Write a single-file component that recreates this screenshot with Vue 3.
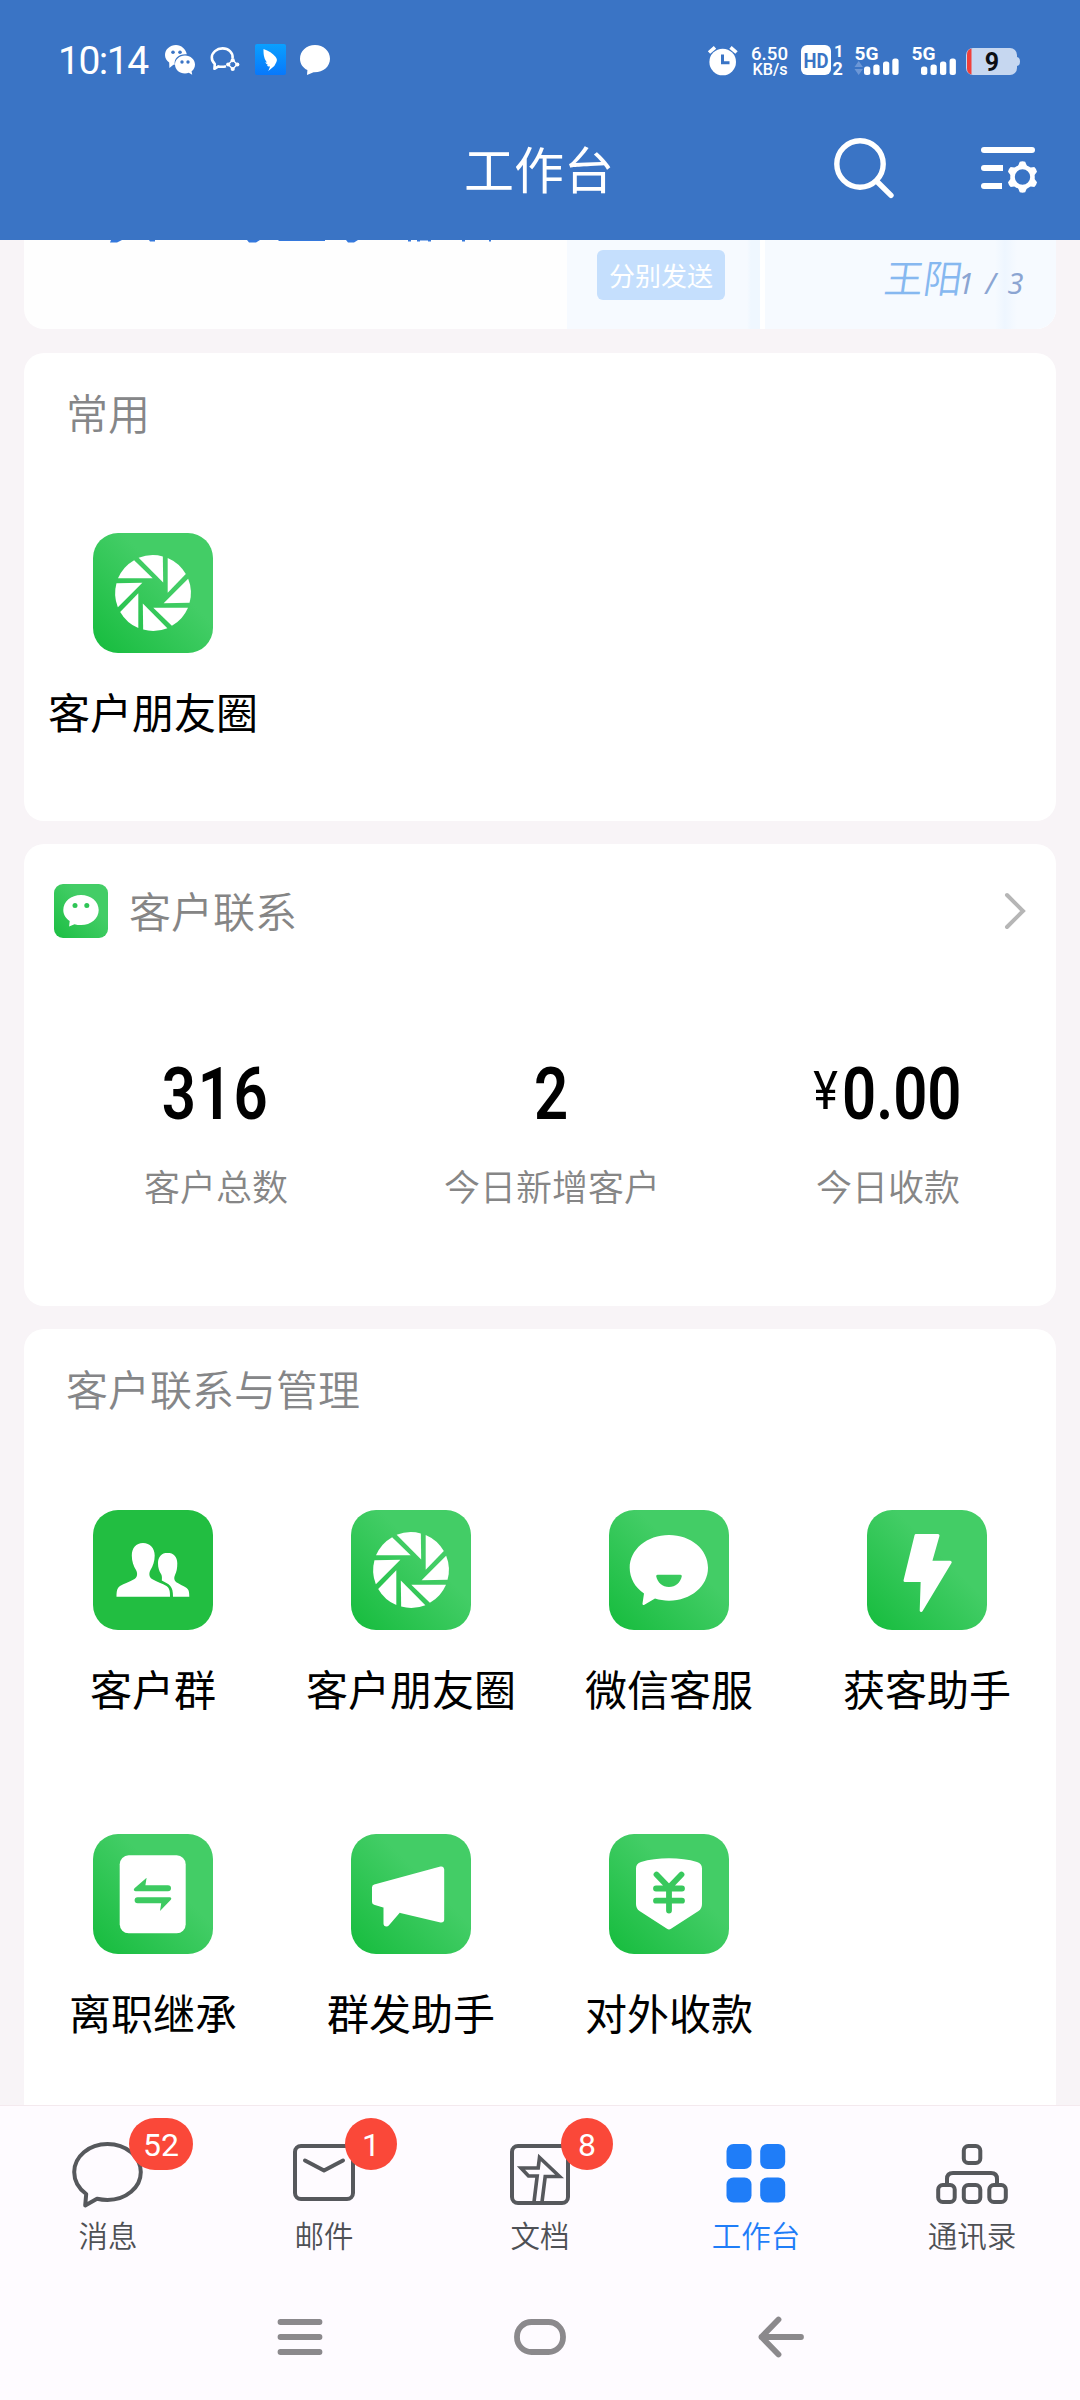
<script setup>
const apps = [
  { name: '客户群', icon: 'group', flat: true },
  { name: '客户朋友圈', icon: 'aperture' },
  { name: '微信客服', icon: 'service' },
  { name: '获客助手', icon: 'bolt' },
  { name: '离职继承', icon: 'transfer' },
  { name: '群发助手', icon: 'horn' },
  { name: '对外收款', icon: 'pay' },
]
const sections = {
  common: [{ name: '客户朋友圈', icon: 'aperture' }],
  manage: apps,
}
const stats = [
  { value: '316', label: '客户总数' },
  { value: '2', label: '今日新增客户' },
  { value: '0.00', unit: '¥', label: '今日收款' },
]
const tabs = [
  { name: '消息', icon: 'chat', badge: '52' },
  { name: '邮件', icon: 'mail', badge: '1' },
  { name: '文档', icon: 'doc', badge: '8' },
  { name: '工作台', icon: 'grid', active: true },
  { name: '通讯录', icon: 'org' },
]
const blades = [0, 45, 90, 135, 180, 225, 270, 315]
const teeth = [0, 60, 120, 180, 240, 300]
</script>

<template>
  <div class="phone">
    <header class="top">
      <div class="status">
        <span class="time">10:14</span>
        <svg class="s-wechat" width="30" height="30" viewBox="0 0 30 30">
          <path fill="#fff" d="M11 0C5 0 0 4.400 0 10c0 3.200 1.600 5.800 4.200 7.600L4.400 23l4-3.200h1.400C8.600 13 14 8.600 21.800 9.200 20.600 4 16.400 0 11 0z" />
          <path fill="#fff" d="M20 10.400c-5.600 0-10 4-10 9s4.400 9 10 9c1.400 0 2.600-.2 3.800-.6l3.400 2-.6-3.600c2.200-1.600 3.400-4 3.400-6.800 0-5-4.400-9-10-9z" />
          <g fill="#3a74c5"><circle cx="8" cy="7.200" r="1.800" /><circle cx="15" cy="7.200" r="1.800" /><circle cx="17" cy="17" r="1.700" /><circle cx="23" cy="17" r="1.700" /></g>
        </svg>
        <svg class="s-work" width="30" height="30" viewBox="0 0 30 30">
          <path fill="none" stroke="#fff" stroke-width="2.600" stroke-linejoin="round" d="M22.600 14C23 8.500 18.500 4.400 12.600 4.400S1.800 8.600 1.800 13.600c0 3 1.400 5 3 6.400l-.4 4.800 4-2.400c2.400.6 4.800.6 7.600-.2" />
          <path fill="none" stroke="#fff" stroke-width="1.400" d="M22.700 16l4.500 4.500-4.500 4.500-4.500-4.500z" />
          <g fill="#fff"><circle cx="22.700" cy="16.200" r="2.100" /><circle cx="27.300" cy="20.500" r="2.100" /><circle cx="22.700" cy="25" r="2.100" /><circle cx="18.200" cy="20.500" r="2.100" /></g>
        </svg>
        <svg class="s-ding" width="31" height="31" viewBox="0 0 31 31">
          <defs><linearGradient id="ding" x1="0" y1="0" x2="0" y2="1"><stop offset="0" stop-color="#0aa0ff" /><stop offset="1" stop-color="#0878fb" /></linearGradient></defs>
          <rect width="31" height="31" rx="2" fill="url(#ding)" />
          <path fill="#fff" d="M8.500 5c5 1.800 9.500 4.400 12 7.800 1.600 2.200 1.800 3.400.8 5.400l-2 3.800-6 5 1.800-4.600c-1.600.2-2.600-.2-3.200-1.200l1.400-.2c-1.600-.8-2.600-1.800-3-2.800l1.700.2C9.600 15.600 8.300 11.600 8.500 5z" />
        </svg>
        <svg class="s-bubble" width="30" height="30" viewBox="0 0 30 30">
          <path fill="#fff" d="M15 0C6.600 0 0 6 0 13.700c0 5 2.800 9 7.400 11.400L7 30l6.600-2.800C23 27.600 30 21.600 30 13.700 30 6 23.400 0 15 0z" />
        </svg>
        <svg class="s-right" width="314" height="54" viewBox="706 34 314 54">
          <g fill="#fff">
            <circle cx="722.700" cy="62" r="13.300" />
            <path stroke="#fff" stroke-width="3.600" d="M709 52.500l6-5.200M736.500 52.500l-6-5.200" />
            <path fill="none" stroke="#3a74c5" stroke-width="3" d="M722.500 54.500v8.300h7" />
            <text class="rb" x="751" y="59.800" font-size="18.500" textLength="37" lengthAdjust="spacingAndGlyphs">6.50</text>
            <text class="rb" x="752.500" y="75" font-size="16.500" textLength="35" lengthAdjust="spacingAndGlyphs">KB/s</text>
            <rect x="801" y="45" width="30" height="30" rx="6" />
            <text class="hv" x="803.500" y="67.500" font-size="19.500" textLength="25" lengthAdjust="spacingAndGlyphs" style="fill:#3a74c5">HD</text>
            <text class="hv" x="834" y="57.300" font-size="16.500">1</text>
            <text class="hv" x="832.500" y="75" font-size="18">2</text>
            <text class="hv" x="854.500" y="60" font-size="19" textLength="24" lengthAdjust="spacingAndGlyphs">5G</text>
            <text class="hv" x="911.500" y="60" font-size="19" textLength="24" lengthAdjust="spacingAndGlyphs">5G</text>
            <path fill="#6c97d6" d="M854.500 67l4.200-6 4.200 6zM854.500 69l4.200 6 4.200-6z" />
            <rect x="864" y="66.500" width="6.300" height="8.500" rx="2.500" /><rect x="873.300" y="64.500" width="6.300" height="10.500" rx="2.500" /><rect x="883" y="61.500" width="6.300" height="13.500" rx="2.500" /><rect x="892.300" y="58.500" width="6.300" height="16.500" rx="2.500" />
            <rect x="921" y="66.500" width="6.300" height="8.500" rx="2.500" /><rect x="930.500" y="64.500" width="6.300" height="10.500" rx="2.500" /><rect x="940" y="61.500" width="6.300" height="13.500" rx="2.500" /><rect x="949.600" y="58.500" width="6.300" height="16.500" rx="2.500" />
          </g>
          <rect x="966" y="48" width="51" height="27" rx="7" fill="#c6d7f0" />
          <path fill="#c6d7f0" d="M1017 57q3 .5 3 4.500t-3 4.500z" />
          <path fill="#f0403b" d="M971.500 48.600v25.800q-4.500-1-4.500-6V54.600q0-5 4.500-6z" />
          <text class="hv" x="992" y="70.500" font-size="25" text-anchor="middle" fill="#0c0f14">9</text>
        </svg>
      </div>
      <div class="bar">
        <h1>工作台</h1>
        <svg class="search" width="64" height="64" viewBox="0 0 64 64" fill="none" stroke="#fff" stroke-width="5.400" stroke-linecap="round">
          <ellipse cx="27" cy="27" rx="23.200" ry="23.200" /><path d="M44.500 45L58 58.300" />
        </svg>
        <svg class="menu" width="60" height="50" viewBox="0 0 60 50">
          <g stroke="#fff" stroke-width="6" fill="none"><path stroke-linecap="round" d="M4 5h48" /><path d="M4 23h19M4 41h18" /></g>
          <g fill="#fff"><circle cx="4" cy="23" r="3" /><circle cx="4" cy="41" r="3" /></g>
          <circle cx="42.500" cy="32" r="17.500" fill="#3a74c5" />
          <circle cx="42.500" cy="32" r="10" fill="none" stroke="#fff" stroke-width="4.600" />
          <path v-for="t in teeth" :key="t" :transform="`rotate(${t} 42.500 32)`" fill="#fff" d="M37 23.500l2.800-6.700q2.700-.9 5.400 0l2.800 6.700z" />
        </svg>
      </div>
    </header>

    <main>
      <section class="banner">
        <svg class="cut" width="543" height="4" viewBox="24 0 543 4" fill="#3478dc"><path d="M111 0h11l-5 2.500h-7zM149 0h6v1.500h-5zM247 0h13l-4 2.500h-7zM278 0h47v1h-46zM346 0h12l-4 2.500h-6zM408 0h3v1.500h-3zM417 0h14v1.500h-3v-1h-8v1h-3zM462 0h3v1.500h-3zM489 0h2v1.500h-2z" /></svg>
        <div class="shade">
          <div class="pane left"><span class="send">分别发送</span></div>
          <div class="pane right"><span class="sign">王阳</span><span class="page">1 / 3</span></div>
        </div>
      </section>

      <template v-for="(list, key) in sections" :key="key">
        <section v-if="key === 'manage'" class="card contact">
          <div class="head">
            <svg width="54" height="54" viewBox="0 0 54 54">
              <defs><linearGradient id="gs" x1="0" y1="1" x2="1" y2="0"><stop offset="0" stop-color="#1bbe42" /><stop offset=".65" stop-color="#43cd66" /></linearGradient></defs>
              <rect width="54" height="54" rx="9" fill="url(#gs)" />
              <path fill="#fff" d="M27 11C17 11 9.300 17.600 9.300 26c0 4.600 2.400 8.400 6.400 11l-.6 5.600 5.400-2.400c2 .6 4.200.9 6.500.9 10 0 17.700-6.600 17.700-15.100S37 11 27 11z" />
              <g fill="#2fc556"><circle cx="21" cy="21.500" r="2.500" /><circle cx="32.800" cy="21.500" r="2.500" /></g>
            </svg>
            <span class="h-title">客户联系</span>
            <svg class="chev" width="24" height="40" viewBox="0 0 24 40" fill="none" stroke="#b6b6b6" stroke-width="4"><path stroke-linecap="round" d="M3 4l16 16L3 36" /></svg>
          </div>
          <div class="stats">
            <div v-for="s in stats" :key="s.label" class="stat">
              <div class="num" :class="{ money: s.unit }"><span v-if="s.unit" class="unit">{{ s.unit }}</span><span>{{ s.value }}</span></div>
              <div class="lab">{{ s.label }}</div>
            </div>
          </div>
        </section>

        <section class="card" :class="key">
          <h2>{{ key === 'common' ? '常用' : '客户联系与管理' }}</h2>
          <div class="apps">
            <div v-for="a in list" :key="a.name" class="app">
              <div class="tile" :class="{ flat: a.flat }">
                <svg width="120" height="120" viewBox="0 0 120 120" fill="#fff">
                  <g v-if="a.icon === 'aperture'" transform="translate(60 60)">
                    <path v-for="b in blades" :key="b" :transform="`rotate(${b})`" d="M14.700-.3V-35A38 38 0 0 1 32.800-18.900z" />
                  </g>
                  <template v-else-if="a.icon === 'group'">
                    <path d="M50 33c-7 0-11.200 5-11.200 12.500 0 6 1.800 10.500 4.200 14.500 1.800 3.500 1.500 7-1.500 9-5 3.200-10.500 4.200-14.500 7-2.500 1.800-3.500 4-3.500 10.700H77c.2-6.200-1-9-3.500-10.700-4-2.800-9.500-3.800-14.500-7-3-2-3.300-5.500-1.500-9 2.400-4 4.200-8.500 4.200-14.500C61.700 38 57 33 50 33z" />
                    <path d="M74.500 42.700c-6 0-9.500 4.300-9.500 10.300 0 5 1.200 8.200 3.200 11.300 1 2 .8 4.400.6 6.200 3 1.800 6.500 3 8.500 5.500 2 2.400 2.700 5.500 2.700 10.700h16.300c0-4.700-.5-7.300-3-8.900-3.300-2.200-7-3.600-10-5.500-2.200-1.500-2.700-4.500-1.200-7.500 1.400-3 2.200-6 2.200-11.500 0-6.200-3.600-10.600-9.800-10.600z" />
                  </template>
                  <path v-else-if="a.icon === 'service'" fill-rule="evenodd" d="M60 25C38 25 20.700 39.500 20.700 57.800c0 10.400 5.300 19.700 14.300 25.700L33.500 93.500c-.2 1.300.8 1.900 1.900 1.200L46 88.600c4.500 1.400 9 2.100 14 2.100 22 0 39-14.500 39-32.900S82 25 60 25zM48.500 64.700h23q1.500 0 1.300 1.500C71.500 72.500 66.500 77 60 77s-11.500-4.500-12.800-10.800q-.2-1.500 1.300-1.500z" />
                  <path v-else-if="a.icon === 'bolt'" stroke="#fff" stroke-width="3" stroke-linejoin="round" d="M49 25.500h22l-7.500 26.700h19.700L54.200 100.500l1-30H38z" />
                  <template v-else-if="a.icon === 'transfer'">
                    <rect x="26.700" y="21.300" width="66" height="78" rx="9" />
                    <path fill="#3dca61" d="M42.500 57.200q-2.800-.4-1-2.900L53.600 43.700l-1.200 7.500H75q3 0 3 3t-3 3zM44.600 63.200h32q2.800.4 1 2.900L67 77l1.200-7.800H44.600q-3 0-3-3t3-3z" />
                  </template>
                  <path v-else-if="a.icon === 'horn'" stroke="#fff" stroke-width="6" stroke-linejoin="round" d="M24 53.500L90.200 35.500v50L50 76l-14.500-4.500L24 68zM35.500 72v17.500L48 75z" />
                  <template v-else>
                    <path d="M60 24.300c10 0 20 1.200 28 3.700 3.500 1.200 5 3 5 6.500V70q0 4.500-3.500 7L62 94.800q-2 1.300-4 0L30.500 77Q27 74.500 27 70V34.500c0-3.500 1.500-5.300 5-6.500 8-2.500 18-3.700 28-3.700z" />
                    <path fill="none" stroke="#38c85d" stroke-width="5.800" stroke-linecap="round" d="M47.500 40.500L60 53.500l12.500-13M47 54.500h26M47 66.700h26M60 54v22.500" />
                  </template>
                </svg>
              </div>
              <div class="name">{{ a.name }}</div>
            </div>
          </div>
        </section>
      </template>
    </main>

    <footer>
      <nav class="tabs">
        <div v-for="t in tabs" :key="t.name" class="tab" :class="{ on: t.active }">
          <div class="ico">
            <svg width="72" height="66" viewBox="0 0 72 66" fill="none" stroke="#56585c" stroke-width="4">
              <path v-if="t.icon === 'chat'" stroke-linejoin="round" d="M35.500 2C17 2 2.200 14.500 2.200 30c0 9 4.500 16.500 12 22l-1 11.500L25 56.800c3.400.8 6.800 1.200 10.500 1.200 18.500 0 33.300-12.500 33.300-28S54 2 35.500 2z" />
              <template v-else-if="t.icon === 'mail'"><rect x="7" y="4" width="58" height="53" rx="6" /><path stroke-linecap="round" stroke-linejoin="round" d="M17 18.500l19 10 19-10" /></template>
              <template v-else-if="t.icon === 'doc'"><rect x="8" y="4" width="56" height="57" rx="6" /><path stroke-width="3.600" d="M30 60l3.200-26h-8.700l-7.500-8h17.200l1.300-10.500L55.500 34.500H41.200L38 60" /></template>
              <g v-else-if="t.icon === 'grid'" fill="#1f7df8" stroke="none"><rect x="6.500" y="2" width="25" height="25" rx="7" /><rect x="40.200" y="2" width="25" height="25" rx="7" /><rect x="6.500" y="35.500" width="25" height="25" rx="7" /><rect x="40.200" y="35.500" width="25" height="25" rx="7" /></g>
              <template v-else><rect x="27.800" y="4" width="16.500" height="17" rx="4.500" /><rect x="2.200" y="43" width="16.500" height="17" rx="4.500" /><rect x="27.800" y="43" width="16.500" height="17" rx="4.500" /><rect x="53.300" y="43" width="16.500" height="17" rx="4.500" /><path d="M11 43v-6q0-6 6-6h38q6 0 6 6v6" /></template>
            </svg>
            <span v-if="t.badge" class="badge">{{ t.badge }}</span>
          </div>
          <span class="t-name">{{ t.name }}</span>
        </div>
      </nav>
      <div class="keys">
        <svg width="52" height="44" viewBox="0 0 52 44"><path d="M7.500 7h39M7.500 22h39M7.500 37h39" /></svg>
        <svg width="54" height="44" viewBox="0 0 54 44"><rect x="4" y="7" width="46" height="30" rx="14.500" /></svg>
        <svg width="52" height="44" viewBox="0 0 52 44"><path d="M6.500 22H46M23.500 4.500L6.500 22l17 17.500" /></svg>
      </div>
    </footer>
  </div>
</template>

<style>
body { margin: 0; background: #f8f4f7; }
</style>

<style scoped>
.phone { width: 1080px; height: 2400px; overflow: hidden; display: flex; flex-direction: column; background: #f8f4f7; font-family: "Noto Sans CJK SC", sans-serif; font-weight: 350; }
svg { display: block; flex: none; }
.top { height: 240px; flex: none; background: #3a74c5; color: #fff; }
.status { height: 100px; display: flex; align-items: flex-start; box-sizing: border-box; padding-top: 44px; }
.time { font: 400 39px/34px Roboto, sans-serif; margin-left: 58px; width: 106px; letter-spacing: -1.500px; }
.s-wechat { margin: 1px 15px 0 1px; }
.s-work { margin-right: 15px; }
.s-ding { margin: 0 14px 0 0; }
.s-bubble { margin-top: 1px; }
.s-right { margin: -10px 60px 0 auto; }
.rb { font-family: Roboto, sans-serif; font-weight: 500; }
.hv { font-family: Roboto, sans-serif; font-weight: 700; }
.bar { height: 140px; display: flex; align-items: flex-start; }
h1 { margin: 42px 0 0 464px; width: 369px; font-size: 50px; line-height: 50px; font-weight: 400; }
.search { margin-top: 37px; }
.menu { margin: 45px 0 0 83px; }
main { flex: 1; min-height: 0; display: flex; flex-direction: column; padding: 0 24px; overflow: hidden; }
.banner { height: 89px; flex: none; display: flex; background: #fefefe; border-radius: 0 0 20px 20px; overflow: hidden; margin-bottom: 24px; }
.shade { flex: 1; display: flex; gap: 5px; background: #fff; }
.left { width: 193px; background: linear-gradient(90deg, #f6faff 180px, #eff7ff 184px); }
.right { flex: 1; display: flex; background: linear-gradient(90deg, #f6faff 230px, #eef6ff 240px, #f6faff 252px); }
.send { display: block; margin: 10px 0 0 30px; width: 128px; height: 50px; border-radius: 6px; background: #c5dffd; color: #fff; font-size: 26px; line-height: 50px; text-align: center; font-weight: 400; }
.sign { margin: 15px 0 0 118px; width: 75px; font-size: 39px; line-height: 42px; color: #86b8f0; transform: skewX(-8deg); white-space: nowrap; }
.page { margin-top: 26px; font: italic 400 29px/34px "Noto Sans", sans-serif; color: #8ba5d2; white-space: nowrap; letter-spacing: 2px; }
.card { flex: none; background: #fff; border-radius: 20px; margin-bottom: 24px; }
.common { height: 468px; margin-bottom: 23px; }
.contact { height: 462px; margin-bottom: 23px; }
.manage { height: 820px; }
h2 { margin: 0; padding: 34px 0 0 42px; height: 146px; font-size: 42px; line-height: 50px; font-weight: 350; color: #858688; }
.manage h2 { height: 147px; }
.apps { display: grid; grid-template-columns: repeat(4, 258px); }
.app { height: 324px; display: flex; flex-direction: column; align-items: center; }
.tile { width: 120px; height: 120px; border-radius: 25px; background: linear-gradient(45deg, #1bbe42 8%, #43cd66 62%); }
.tile.flat { background: #22be41; }
.name { margin-top: 33px; font-size: 42px; line-height: 50px; font-weight: 400; color: #000; white-space: nowrap; }
.head { display: flex; align-items: center; height: 54px; padding: 40px 28px 0 30px; }
.h-title { margin: -2px 0 0 21px; flex: 1; font-size: 42px; line-height: 50px; color: #858585; }
.stats { display: flex; margin-left: 24px; padding-top: 116px; }
.stat { width: 336px; flex: none; display: flex; flex-direction: column; align-items: center; }
.num { height: 80px; font: 600 73px/80px Roboto, sans-serif; color: #000; transform: scaleX(.82); white-space: nowrap; display: flex; letter-spacing: 2px; }
.money { letter-spacing: 0; }
.unit { font: 400 53px/74px Roboto, sans-serif; margin-right: 6px; transform: scaleX(1.08); }
.lab { margin-top: 26px; font-size: 36px; line-height: 50px; color: #868686; }
footer { height: 295px; box-sizing: border-box; flex: none; background: #fefbff; border-top: 1px solid #f4e9ee; }
.tabs { display: flex; height: 174px; }
.tab { width: 216px; display: flex; flex-direction: column; align-items: center; color: #4e5055; }
.ico { position: relative; margin-top: 36px; height: 66px; }
.badge { position: absolute; left: 57px; top: -24px; min-width: 52px; height: 52px; box-sizing: border-box; padding: 0 14px; border-radius: 26px; background: #fa4839; color: #fff; font: 400 32px/54px Roboto, sans-serif; text-align: center; }
.t-name { margin-top: 6px; font-size: 29.500px; line-height: 40px; }
.on { color: #1f7df8; }
.keys { display: flex; align-items: center; justify-content: center; gap: 188px; height: 114px; }
.keys svg { fill: none; stroke: #8b898c; stroke-width: 5.800; stroke-linecap: round; stroke-linejoin: round; }
</style>
